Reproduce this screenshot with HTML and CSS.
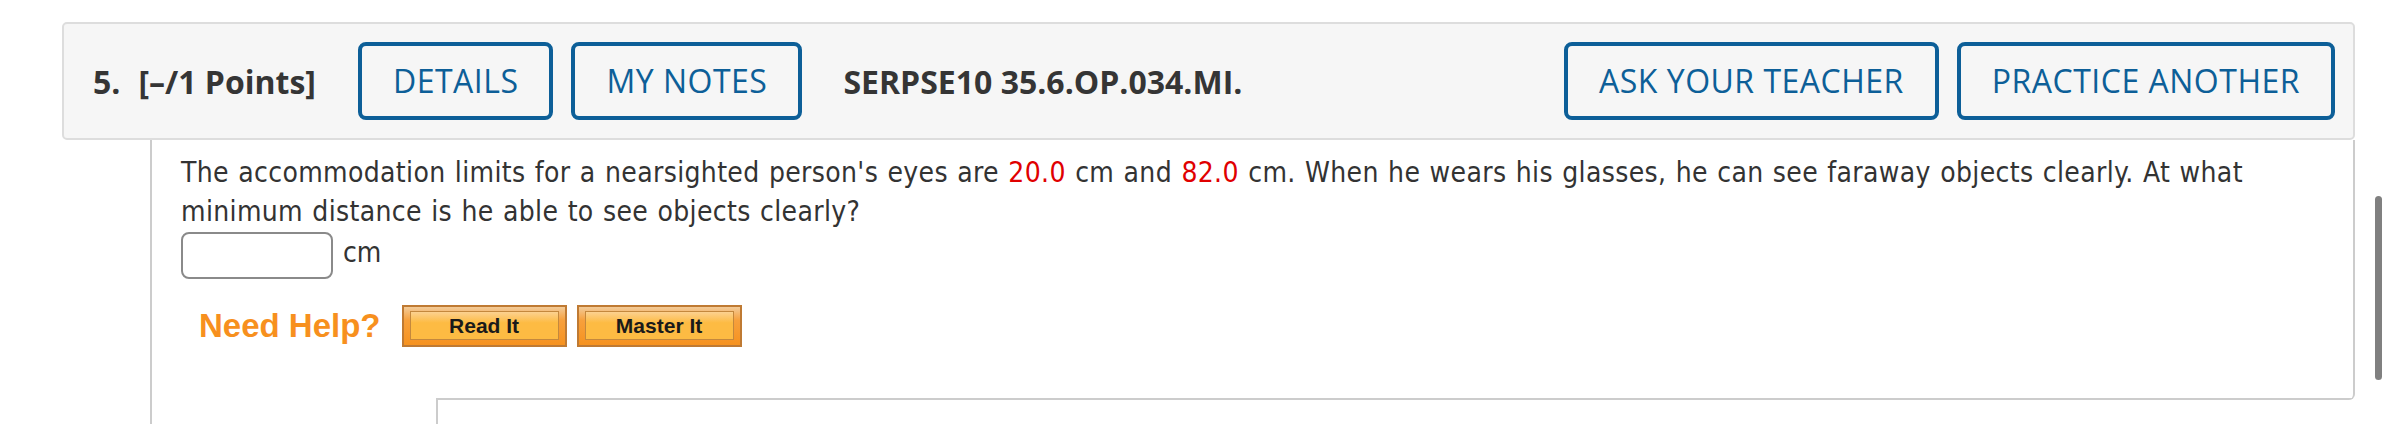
FILE: index.html
```html
<!DOCTYPE html>
<html lang="en">
<head>
<meta charset="utf-8">
<title>Question 5</title>
<link rel="stylesheet" href="styles.css">
</head>
<body>
<div class="question">
  <div class="qhead">
    <span class="qnum">5.</span>
    <span class="qpts">[–/1 Points]</span>
    <button class="hbtn">DETAILS</button>
    <button class="hbtn hbtn-notes">MY NOTES</button>
    <span class="qcode">SERPSE10 35.6.OP.034.MI.</span>
    <div class="hright">
      <button class="hbtn">ASK YOUR TEACHER</button>
      <button class="hbtn">PRACTICE ANOTHER</button>
    </div>
  </div>
  <div class="qbody-wrap">
    <div class="qbody">
      <p class="qtext">The accommodation limits for a nearsighted person's eyes are <span class="val">20.0</span> cm and <span class="val">82.0</span> cm. When he wears his glasses, he can see faraway objects clearly. At what minimum distance is he able to see objects clearly?</p>
      <div class="answer">
        <input class="ans" type="text" aria-label="answer">
        <span class="unit">cm</span>
      </div>
      <div class="help">
        <span class="help-label">Need Help?</span>
        <span class="help-btn"><span class="help-btn-inner">Read It</span></span>
        <span class="help-btn"><span class="help-btn-inner">Master It</span></span>
      </div>
    </div>
    <div class="qfoot"><div class="foot-box"></div></div>
  </div>
</div>
<div class="scroll-thumb"></div>
</body>
</html>
```

FILE: styles.css
```css
html, body {
  margin: 0;
  background: #ffffff;
}

body {
  padding: 22px 33px 0 62px;
  height: 424px;
  box-sizing: border-box;
  overflow: hidden;
  font-family: "DejaVu Sans Condensed", "DejaVu Sans", Verdana, sans-serif;
}

.qhead {
  display: flex;
  align-items: center;
  height: 118px;
  box-sizing: border-box;
  border: 2px solid #dddddd;
  border-radius: 5px;
  background: #f6f6f6;
  padding: 0 18px 0 29px;
  font-family: "Open Sans", sans-serif;
  font-size: 32px;
  color: #353535;
}

.qnum {
  font-weight: 700;
  margin-right: 18px;
}

.qpts {
  font-weight: 700;
  margin-right: 42px;
}

.hbtn {
  font-family: "Open Sans", sans-serif;
  font-size: 32px;
  font-weight: 400;
  letter-spacing: 0.5px;
  line-height: 1;
  color: #0d5f98;
  background: transparent;
  border: 4px solid #0d5f98;
  border-radius: 8px;
  height: 78px;
  padding: 0 31px;
  margin: 0 18px 0 0;
  box-sizing: border-box;
}

.hbtn-notes {
  margin-right: 41px;
}

.qcode {
  font-weight: 700;
}

.hright {
  margin-left: auto;
  display: flex;
  gap: 18px;
}

.hright .hbtn {
  margin: 0;
}

.qbody-wrap {
  margin-left: 88px;
  border-left: 2px solid #cccccc;
  height: 284px;
}

.qbody {
  height: 260px;
  box-sizing: border-box;
  padding: 13px 29px 0 29px;
  border-right: 2px solid #cccccc;
  border-bottom-right-radius: 6px;
  background: linear-gradient(#cccccc, #cccccc) right bottom / calc(100% - 284px) 2px no-repeat;
}

.qtext {
  margin: 0;
  font-size: 28px;
  font-stretch: condensed;
  letter-spacing: 0.35px;
  line-height: 39px;
  color: #333333;
  word-spacing: 1px;
}

.val {
  color: #e00000;
}

.answer {
  display: flex;
  align-items: center;
  gap: 10px;
  margin-top: 1px;
}

.ans {
  width: 152px;
  height: 47px;
  box-sizing: border-box;
  border: 2px solid #8a8a8a;
  border-radius: 8px;
  margin: 0;
  padding: 0;
  background: #ffffff;
}

.unit {
  font-size: 28px;
  font-stretch: condensed;
  line-height: 39px;
  color: #333333;
  margin-bottom: 6px;
}

.help {
  display: flex;
  align-items: center;
  margin-top: 26px;
  padding-left: 18px;
}

.help-label {
  font-family: "Liberation Sans", Arial, sans-serif;
  font-weight: 700;
  font-size: 33px;
  color: #f7901e;
  margin-right: 21px;
}

.help-btn {
  display: flex;
  width: 165px;
  height: 42px;
  box-sizing: border-box;
  border: 2px solid #bf7a33;
  background: linear-gradient(#f3cb98, #f7a03c 35%, #f6921f);
  padding: 4px 6px 5px 6px;
  margin-right: 10px;
}

.help-btn-inner {
  flex: 1;
  display: flex;
  align-items: center;
  justify-content: center;
  border: 1px solid #c4883d;
  background: linear-gradient(#fcd190, #fdbb43 40%);
  font-family: "Liberation Sans", Arial, sans-serif;
  font-weight: 700;
  font-size: 21px;
  color: #1a1a1a;
}

.qfoot {
  height: 24px;
  padding-left: 284px;
}

.foot-box {
  height: 100%;
  border-left: 2px solid #cccccc;
}

.scroll-thumb {
  position: absolute;
  left: 2375px;
  top: 196px;
  width: 7px;
  height: 184px;
  background: #808080;
  border-radius: 4px;
}
```
